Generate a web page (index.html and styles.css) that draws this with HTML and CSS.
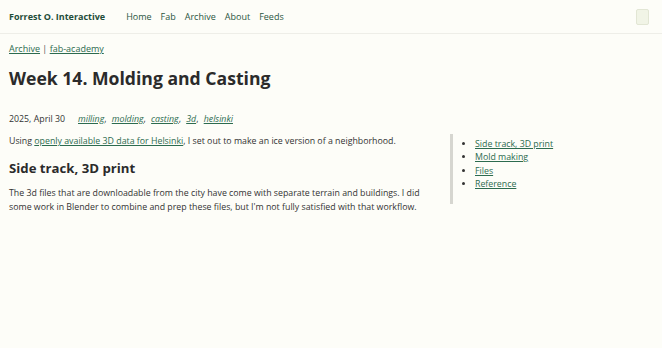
FILE: index.html
```html
<!DOCTYPE html>
<html lang="en">
<head>
<meta charset="UTF-8">
<meta name="viewport" content="width=device-width, initial-scale=1.0">
<title>Week 14. Molding and Casting - Forrest O. Interactive</title>
<link rel="stylesheet" href="styles.css">
</head>
<body>
<header class="site-header">
    <a class="site-title" href="/">Forrest O. Interactive</a>
    <nav class="site-nav">
        <a href="/">Home</a>
        <a href="/fab/">Fab</a>
        <a href="/archive/">Archive</a>
        <a href="/about/">About</a>
        <a href="/feeds/">Feeds</a>
    </nav>
    <button class="theme-toggle" aria-label="Toggle theme"></button>
</header>

<main class="page">
    <div class="breadcrumbs">
        <a href="/archive/">Archive</a> | <a href="/fab-academy/">fab-academy</a>
    </div>
    <h1>Week 14. Molding and Casting</h1>

    <div class="meta">
        <span class="date">2025, April 30</span>
        <span class="tags">
            <a href="#">milling</a>, <a href="#">molding</a>, <a href="#">casting</a>, <a href="#">3d</a>, <a href="#">helsinki</a>
        </span>
    </div>

    <div class="layout">
        <article class="post">
            <p>Using <a href="#">openly available 3D data for Helsinki</a>, I set out to make an ice version of a neighborhood.</p>
            <h2 id="side-track">Side track, 3D print</h2>
            <p>The 3d files that are downloadable from the city have come with separate terrain and buildings. I did some work in Blender to combine and prep these files, but I'm not fully satisfied with that workflow.</p>
        </article>
        <aside class="toc">
            <ul>
                <li><a href="#side-track">Side track, 3D print</a></li>
                <li><a href="#mold">Mold making</a></li>
                <li><a href="#files">Files</a></li>
                <li><a href="#reference">Reference</a></li>
            </ul>
        </aside>
    </div>
</main>
</body>
</html>
```

FILE: styles.css
```css
body {
    font-family: 'Open Sans', sans-serif;
    font-size: 8.8px;
    line-height: 14px;
    color: #333333;
    background-color: #fdfdf8;
    margin: 0;
    padding: 0;
}
a {
    color: #2c6b4f;
}
.site-header {
    display: flex;
    align-items: center;
    height: 33px;
    padding: 0 9px;
    border-bottom: 1px solid #eeeee8;
}
.site-title {
    font-weight: bold;
    font-size: 9px;
    color: #1f4d3a;
    text-decoration: none;
}
.site-nav {
    display: flex;
    gap: 9px;
    margin-left: 21px;
}
.site-nav a {
    font-size: 9px;
    color: #2a5541;
    text-decoration: none;
}
.theme-toggle {
    margin-left: auto;
    margin-right: 4px;
    width: 13px;
    height: 16px;
    padding: 0;
    background-color: #f1f4e6;
    border: 1px solid #e2e6d4;
    border-radius: 2px;
}
.page {
    padding: 8px 9px;
}
.breadcrumbs {
    font-size: 9px;
    color: #555555;
}
h1 {
    font-size: 17.6px;
    line-height: 28px;
    margin: 8px 0 20px;
    color: #2b2b2b;
}
.meta {
    display: flex;
    gap: 13px;
    margin-bottom: 8px;
}
.tags a {
    font-style: italic;
    margin-left: 3px;
}
.tags a:first-child {
    margin-left: 0;
}
.layout {
    display: flex;
    gap: 11px;
}
.post {
    width: 430px;
}
.post p {
    margin: 0 0 10px;
}
h2 {
    font-size: 13.2px;
    line-height: 20px;
    margin: 0 0 8px;
    color: #2b2b2b;
}
.toc {
    border-left: 3px solid #d6d6d0;
    padding: 4px 0 0;
    height: 66px;
}
.toc ul {
    margin: 0;
    padding-left: 22px;
}
.toc li {
    line-height: 13.3px;
}
```
